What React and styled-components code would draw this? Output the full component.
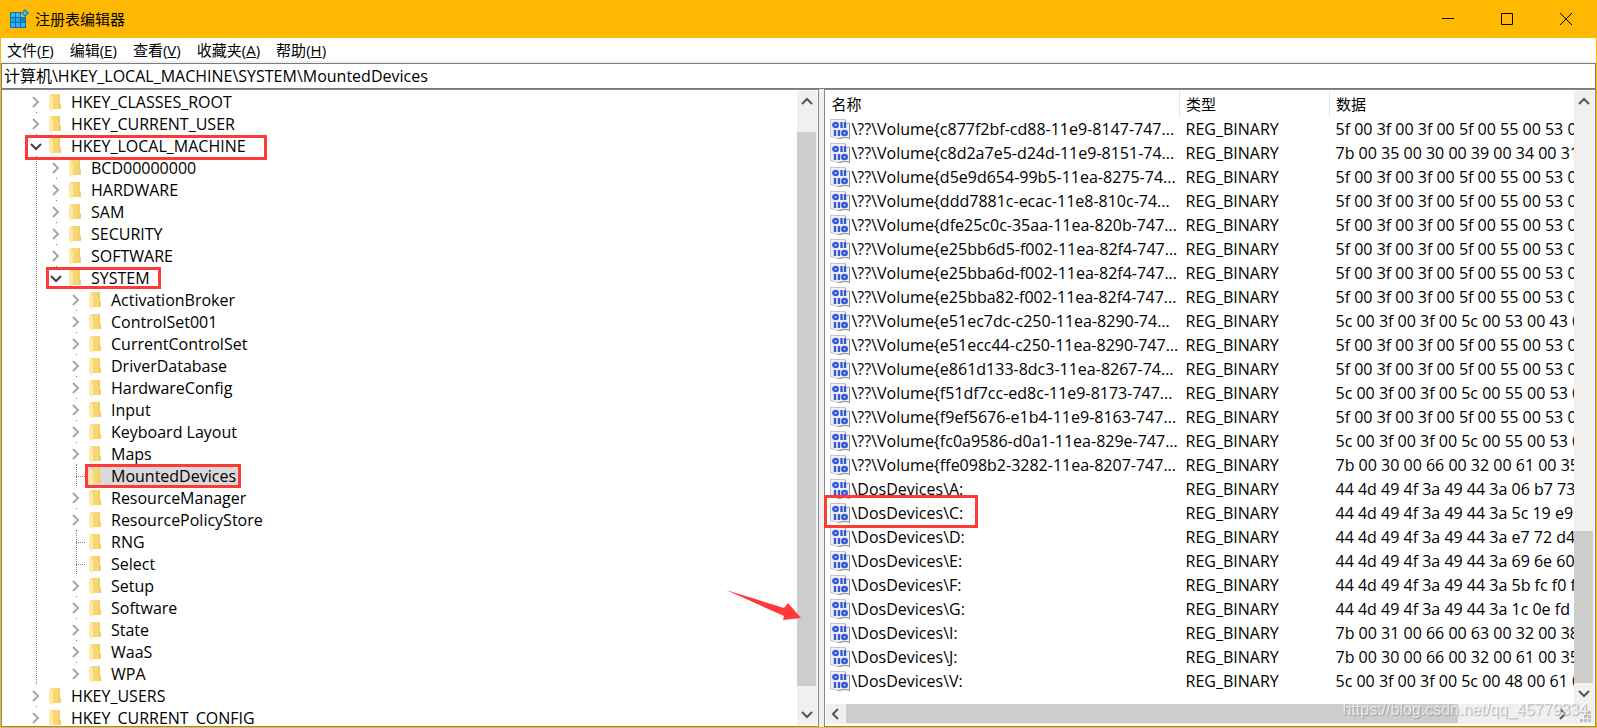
import React from 'react'
import styled, { createGlobalStyle } from 'styled-components'

const GlobalStyle = createGlobalStyle`
  * { box-sizing: border-box; }
  body { margin: 0; background: #fff; overflow: hidden; }
  body, button, input, table {
    font-family: 'Open Sans', 'Noto Sans CJK SC', sans-serif;
    font-size: 16px;
    color: #000;
  }
  button { border: 0; padding: 0; background: none; }
`

const arbol = [
  { level: 0, name: 'HKEY_CLASSES_ROOT', state: 'closed' },
  { level: 0, name: 'HKEY_CURRENT_USER', state: 'closed' },
  { level: 0, name: 'HKEY_LOCAL_MACHINE', state: 'open', mark: 'root' },
  { level: 1, name: 'BCD00000000', state: 'closed' },
  { level: 1, name: 'HARDWARE', state: 'closed' },
  { level: 1, name: 'SAM', state: 'closed' },
  { level: 1, name: 'SECURITY', state: 'closed' },
  { level: 1, name: 'SOFTWARE', state: 'closed' },
  { level: 1, name: 'SYSTEM', state: 'open', mark: 'key' },
  { level: 2, name: 'ActivationBroker', state: 'closed' },
  { level: 2, name: 'ControlSet001', state: 'closed' },
  { level: 2, name: 'CurrentControlSet', state: 'closed' },
  { level: 2, name: 'DriverDatabase', state: 'closed' },
  { level: 2, name: 'HardwareConfig', state: 'closed' },
  { level: 2, name: 'Input', state: 'closed' },
  { level: 2, name: 'Keyboard Layout', state: 'closed' },
  { level: 2, name: 'Maps', state: 'closed' },
  { level: 2, name: 'MountedDevices', state: 'leaf', mark: 'selected' },
  { level: 2, name: 'ResourceManager', state: 'closed' },
  { level: 2, name: 'ResourcePolicyStore', state: 'closed' },
  { level: 2, name: 'RNG', state: 'leaf' },
  { level: 2, name: 'Select', state: 'leaf' },
  { level: 2, name: 'Setup', state: 'closed' },
  { level: 2, name: 'Software', state: 'closed' },
  { level: 2, name: 'State', state: 'closed' },
  { level: 2, name: 'WaaS', state: 'closed' },
  { level: 2, name: 'WPA', state: 'closed', last: true },
  { level: 0, name: 'HKEY_USERS', state: 'closed' },
  { level: 0, name: 'HKEY_CURRENT_CONFIG', state: 'closed', last: true },
]

const USB = '5f 00 3f 00 3f 00 5f 00 55 00 53 00'

const valores = [
  ['\\??\\Volume{c877f2bf-cd88-11e9-8147-747...', USB],
  ['\\??\\Volume{c8d2a7e5-d24d-11e9-8151-74...', '7b 00 35 00 30 00 39 00 34 00 31'],
  ['\\??\\Volume{d5e9d654-99b5-11ea-8275-74...', USB],
  ['\\??\\Volume{ddd7881c-ecac-11e8-810c-74...', USB],
  ['\\??\\Volume{dfe25c0c-35aa-11ea-820b-747...', USB],
  ['\\??\\Volume{e25bb6d5-f002-11ea-82f4-747...', USB],
  ['\\??\\Volume{e25bba6d-f002-11ea-82f4-747...', USB],
  ['\\??\\Volume{e25bba82-f002-11ea-82f4-747...', USB],
  ['\\??\\Volume{e51ec7dc-c250-11ea-8290-74...', '5c 00 3f 00 3f 00 5c 00 53 00 43 00'],
  ['\\??\\Volume{e51ecc44-c250-11ea-8290-747...', USB],
  ['\\??\\Volume{e861d133-8dc3-11ea-8267-74...', USB],
  ['\\??\\Volume{f51df7cc-ed8c-11e9-8173-747...', '5c 00 3f 00 3f 00 5c 00 55 00 53 00'],
  ['\\??\\Volume{f9ef5676-e1b4-11e9-8163-747...', USB],
  ['\\??\\Volume{fc0a9586-d0a1-11ea-829e-747...', '5c 00 3f 00 3f 00 5c 00 55 00 53 00'],
  ['\\??\\Volume{ffe098b2-3282-11ea-8207-747...', '7b 00 30 00 66 00 32 00 61 00 35'],
  ['\\DosDevices\\A:', '44 4d 49 4f 3a 49 44 3a 06 b7 73'],
  ['\\DosDevices\\C:', '44 4d 49 4f 3a 49 44 3a 5c 19 e9 4'],
  ['\\DosDevices\\D:', '44 4d 49 4f 3a 49 44 3a e7 72 d4'],
  ['\\DosDevices\\E:', '44 4d 49 4f 3a 49 44 3a 69 6e 60'],
  ['\\DosDevices\\F:', '44 4d 49 4f 3a 49 44 3a 5b fc f0 fc'],
  ['\\DosDevices\\G:', '44 4d 49 4f 3a 49 44 3a 1c 0e fd c'],
  ['\\DosDevices\\I:', '7b 00 31 00 66 00 63 00 32 00 38'],
  ['\\DosDevices\\J:', '7b 00 30 00 66 00 32 00 61 00 35'],
  ['\\DosDevices\\V:', '5c 00 3f 00 3f 00 5c 00 48 00 61 00'],
]

const menus = [
  ['文件', 'F'],
  ['编辑', 'E'],
  ['查看', 'V'],
  ['收藏夹', 'A'],
  ['帮助', 'H'],
]

const AppIcon = () => (
  <svg width="20" height="20" viewBox="0 0 20 20" aria-hidden="true">
    <path d="M1 3h11v5h5v11H1z" fill="#0b6fae" />
    <path d="M2 4h4v4H2zM7 4h4v4H7z" fill="#3bb8ee" />
    <path d="M2 9h4v4H2zM7 9h4v4H7z" fill="#1fa3e2" />
    <path d="M12 9h4v4h-4z" fill="#0a86cc" />
    <path d="M2 14h4v4H2zM7 14h4v4H7zM12 14h4v4h-4z" fill="#35b4ec" />
    <path d="M16 0l4 4-4 4-4-4z" fill="#1687bd" />
    <path d="M16 2l2 2-2 2-2-2z" fill="#5cc4e8" />
  </svg>
)

const FolderIcon = () => (
  <svg width="13" height="18" viewBox="0 0 13 18" aria-hidden="true">
    <path d="M2 1h9v9l1 1v5H2z" fill="#f7d673" />
    <path d="M9 1h2v9l1 1v5H9z" fill="#f3cf68" />
    <path d="M0 1l4 3v13l-1 1-3-2z" fill="#ffe9a6" />
  </svg>
)

const BinaryIcon = () => (
  <svg width="20" height="20" viewBox="0 0 20 20" aria-hidden="true">
    <path d="M.5.5h15l4 4v15c-2-1-4-1-5.500-1s-3 1-5.500 1-4-2-8-1.500z" fill="#f1f1f1" stroke="#c4c4c4" />
    <path d="M19.500 4v15.500c-2-1-4-1-5.500-1s-3 1-5.500 1" stroke="#8f8f8f" fill="none" />
    <path d="M15.500.5v4h4" fill="#fff" stroke="#a8a8a8" />
    <g fill="none" stroke="#3459dc" strokeWidth="2.400">
      <ellipse cx="5.500" cy="6" rx="2.300" ry="2" />
      <path d="M11.500 3v6M15 3v6M5 11v6M9 11v6" />
      <ellipse cx="14.500" cy="14" rx="2.300" ry="2" />
    </g>
  </svg>
)

const chevrons = {
  up: 'M1 9l5-5 5 5',
  down: 'M1 4l5 5 5-5',
  left: 'M8 1L3 6l5 5',
  right: 'M3 1l5 5-5 5',
}

const Chevron = ({ to, color = '#555' }) => (
  <svg width="12" height="12" viewBox="0 0 12 12" aria-hidden="true">
    <path d={chevrons[to]} fill="none" stroke={color} strokeWidth="2" />
  </svg>
)

const ScrollBar = ({ horizontal, parts }) => (
  <Bar $horizontal={horizontal}>
    <BarButton aria-label={horizontal ? '向左' : '向上'}><Chevron to={horizontal ? 'left' : 'up'} /></BarButton>
    <Space $grow={parts[0]} />
    <Thumb $grow={parts[1]} $horizontal={horizontal} />
    <Space $grow={parts[2]} />
    <BarButton aria-label={horizontal ? '向右' : '向下'}><Chevron to={horizontal ? 'right' : 'down'} /></BarButton>
  </Bar>
)

const TreeRow = ({ item }) => (
  <Node>
    {item.level > 0 && <Guide $line="full" />}
    {item.level > 1 && <Guide />}
    {item.state === 'leaf' ? (
      <Guide $line="full" $branch />
    ) : (
      <Toggle $last={item.last || item.mark === 'key'} aria-label={item.name}>
        {item.state === 'open'
          ? <Chevron to="down" color="#404040" />
          : <Chevron to="right" color="#a6a6a6" />}
      </Toggle>
    )}
    <Key $selected={item.mark === 'selected'}>
      <FolderIcon />
      <span>{item.name}</span>
    </Key>
    {item.mark && <Mark $at={item.mark} />}
  </Node>
)

const App = () => {
  return (
    <Window>
      <GlobalStyle />
      <TitleBar>
        <AppIcon />
        <Title>注册表编辑器</Title>
        <WindowButton aria-label="最小化">
          <svg width="12" height="12" viewBox="0 0 12 12"><path d="M0 5.500h12" stroke="#000" /></svg>
        </WindowButton>
        <WindowButton aria-label="最大化">
          <svg width="12" height="12" viewBox="0 0 12 12"><path d="M.5.5h11v11H.5z" stroke="#000" fill="none" /></svg>
        </WindowButton>
        <WindowButton aria-label="关闭">
          <svg width="12" height="12" viewBox="0 0 12 12"><path d="M0 0l12 12M12 0L0 12" stroke="#000" /></svg>
        </WindowButton>
      </TitleBar>
      <MenuBar>
        {menus.map(([label, letter]) => (
          <MenuButton key={letter}>{label}(<u>{letter}</u>)</MenuButton>
        ))}
      </MenuBar>
      <Address
        aria-label="地址"
        defaultValue="计算机\HKEY_LOCAL_MACHINE\SYSTEM\MountedDevices"
      />
      <Panes>
        <Pane>
          <Tree>
            {arbol.map((item) => <TreeRow key={item.name} item={item} />)}
          </Tree>
          <ScrollBar parts={[21, 554, 18]} />
          <Arrow width="76" height="32" viewBox="0 0 76 32" aria-hidden="true">
            <path d="M0 0L58 18l4-5 13 15-18 2 1-4z" fill="#fd3a37" />
          </Arrow>
        </Pane>
        <Splitter />
        <ListPane>
          <ListArea>
            <Values>
              <thead>
                <tr>
                  <Head $width={354}>名称</Head>
                  <Head $width={150}>类型</Head>
                  <Head>数据</Head>
                </tr>
              </thead>
              <tbody>
                {valores.map(([name, data]) => (
                  <tr key={name}>
                    <Cell>
                      <ValueName>
                        <BinaryIcon />
                        {name}
                        {name === '\\DosDevices\\C:' && <Mark $at="value" />}
                      </ValueName>
                    </Cell>
                    <Cell>REG_BINARY</Cell>
                    <Cell>{data}</Cell>
                  </tr>
                ))}
              </tbody>
            </Values>
          </ListArea>
          <ScrollBar parts={[420, 152, 0]} />
          <ScrollBar horizontal parts={[0, 610, 95]} />
          <Grip>
            <svg width="12" height="12" viewBox="0 0 12 12" aria-hidden="true">
              <path d="M8 0h3v3H8zM4 4h3v3H4zM8 4h3v3H8zM0 8h3v3H0zM4 8h3v3H4zM8 8h3v3H8z" fill="#bfbfbf" />
            </svg>
          </Grip>
        </ListPane>
      </Panes>
      <Watermark>https://blog.csdn.net/qq_45779334</Watermark>
    </Window>
  )
}

const Window = styled.main`
position: relative;
display: flex;
flex-direction: column;
height: 100vh;
border: 1px solid #ffb903;
border-top: 0;
background: #f0f0f0;
`

const TitleBar = styled.header`
display: flex;
align-items: center;
flex: none;
height: 38px;
padding: 0 1px 0 8px;
background: #ffb903;
`

const Title = styled.h1`
flex: 1;
margin: 0 0 0 6px;
padding-bottom: 2px;
font-size: 15px;
font-weight: 400;
`

const WindowButton = styled.button`
display: flex;
align-items: center;
justify-content: center;
width: 59px;
height: 38px;
`

const MenuBar = styled.nav`
display: flex;
gap: 16px;
flex: none;
height: 23px;
margin-bottom: 2px;
padding: 1px 0 0 6px;
background: #fff;
`

const MenuButton = styled.button`
font-size: 15px;
line-height: 23px;
white-space: nowrap;
`

const Address = styled.input`
flex: none;
height: 26px;
padding: 0 2px 2px;
border: 1px solid #7a7a7f;
background: #fff;
outline: 0;
`

const Panes = styled.div`
display: grid;
grid-template-columns: minmax(0, 817fr) 5px minmax(0, 772fr);
flex: 1;
min-height: 0;
`

const Pane = styled.section`
position: relative;
display: flex;
min-height: 0;
padding: 1px;
border: 1px solid #828790;
background: #fff;
`

const Splitter = styled.div`
background: #f0f0f0;
`

const Tree = styled.ul`
flex: 1;
min-width: 0;
margin: 0;
padding: 0 0 0 23px;
overflow: hidden;
list-style: none;
`

const Node = styled.li`
position: relative;
display: flex;
height: 22px;
line-height: 22px;
white-space: nowrap;
`

const dots = 'repeating-linear-gradient(#808080 0 1px, transparent 1px 2px)'
const rowDots = 'repeating-linear-gradient(90deg, #808080 0 1px, transparent 1px 2px)'

const Guide = styled.span`
width: 20px;
background-image: ${(p) => (p.$line ? dots : 'none')}${(p) => (p.$branch ? `, ${rowDots}` : '')};
background-repeat: no-repeat;
background-position: 10px 0, 10px 11px;
background-size: 1px 100%, 10px 1px;
`

const Toggle = styled.button`
display: flex;
align-items: center;
justify-content: center;
width: 20px;
height: 22px;
background: ${(p) => (p.$last ? 'none' : 'linear-gradient(#808080, #808080) 10px 100% / 1px 1px no-repeat')};
`

const Key = styled.span`
display: flex;
align-items: center;
gap: 9px;
padding: 0 4px 0 3px;
background: ${(p) => (p.$selected ? '#d9d9d9' : 'none')};
`

// red frames drawn over the rows
const frames = {
  root: 'left: -1px; width: 242px; top: 0; height: 25px;',
  key: 'left: 20px; width: 115px; top: 0; height: 22px;',
  selected: 'left: 59px; width: 156px; top: -1px; height: 24px;',
  value: 'left: -6px; width: 154px; top: -6px; height: 33px;',
}

const Mark = styled.span`
position: absolute;
z-index: 1;
border: 3px solid #fd3a37;
${(p) => frames[p.$at]}
`

const Arrow = styled.svg`
position: absolute;
right: 16px;
bottom: 104px;
`

const Bar = styled.div`
display: flex;
flex-direction: ${(p) => (p.$horizontal ? 'row' : 'column')};
flex: none;
${(p) => (p.$horizontal ? 'height: 20px;' : 'width: 20px;')}
${(p) => (p.$horizontal ? 'padding-right: 1px;' : 'padding-bottom: 1px;')}
background: #f0f0f0;
`

const BarButton = styled.button`
display: flex;
align-items: center;
justify-content: center;
flex: none;
width: 20px;
height: 20px;
`

const Space = styled.div`
flex: ${(p) => p.$grow} 0 0;
`

const Thumb = styled.div`
flex: ${(p) => p.$grow} 0 0;
${(p) => (p.$horizontal ? 'margin-bottom: 1px;' : 'margin-right: 1px;')}
background: #cdcdcd;
`

const ListPane = styled.section`
display: grid;
grid-template-columns: minmax(0, 1fr) 20px;
grid-template-rows: minmax(0, 1fr) 20px;
min-height: 0;
padding: 1px 1px 2px;
border: 1px solid #828790;
background: #fff;
`

// reaches over the pane border so a frame at the left edge is not cut
const ListArea = styled.div`
margin-left: -2px;
padding-left: 2px;
overflow: hidden;
`

const Values = styled.table`
width: 100%;
table-layout: fixed;
border-collapse: collapse;
`

const Head = styled.th`
width: ${(p) => (p.$width ? `${p.$width}px` : 'auto')};
height: 26px;
padding: 0 6px;
border-right: 1px solid #e5e5e5;
font-size: 15px;
font-weight: 400;
line-height: 24px;
text-align: left;
&:last-child {
  border-right: 0;
}
`

const Cell = styled.td`
height: 24px;
padding: 0 0 0 6px;
line-height: 24px;
white-space: nowrap;
&:first-child {
  padding-left: 4px;
}
`

const ValueName = styled.div`
position: relative;
display: flex;
align-items: center;
gap: 2px;
`

const Grip = styled.div`
display: flex;
align-items: flex-end;
justify-content: flex-end;
padding: 0 2px 1px 0;
background: #f0f0f0;
`

const Watermark = styled.span`
position: absolute;
right: 8px;
bottom: 8px;
z-index: 2;
font: 16px 'Liberation Sans', sans-serif;
color: rgba(255, 255, 255, 0.7);
text-shadow: 1px 1px 1px rgba(120, 120, 120, 0.6);
pointer-events: none;
`

export default App
